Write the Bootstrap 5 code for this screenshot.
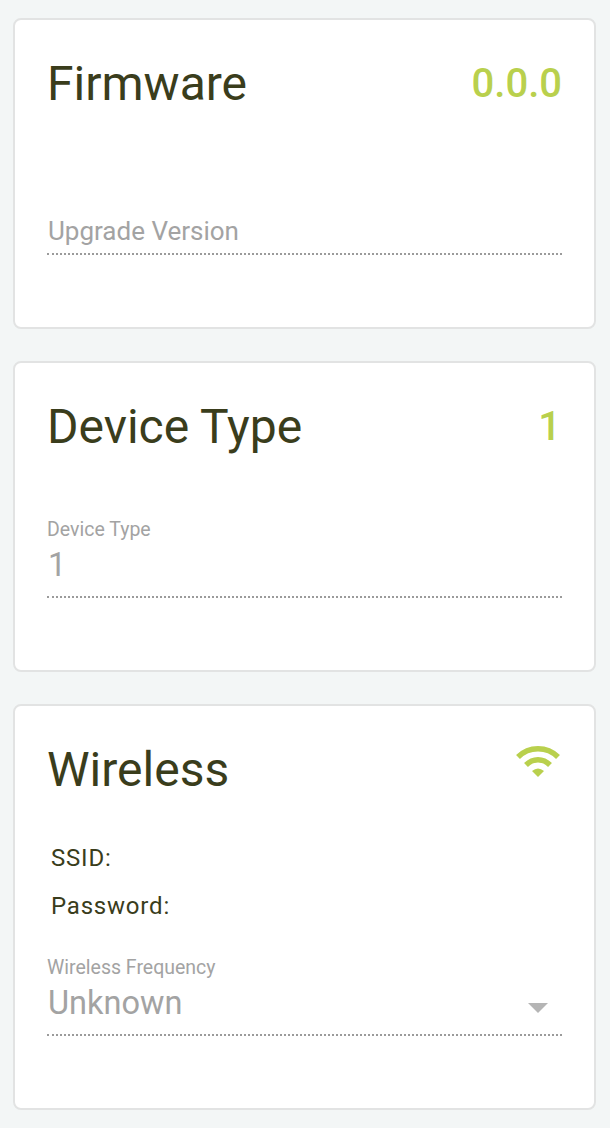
<!DOCTYPE html>
<html lang="en">
<head>
    <meta charset="UTF-8">
    <meta name="viewport" content="width=device-width, initial-scale=1.0">
    <title>Device</title>
    <link href="https://cdn.jsdelivr.net/npm/bootstrap@5.3.2/dist/css/bootstrap.min.css" rel="stylesheet">
    <style>
        body {
            background: #f3f6f6;
            font-family: Roboto, sans-serif;
            color: #3a3d1c;
            padding: 18px 14px 0 13px;
        }
        .panel {
            background: #fff;
            border: 2px solid #e2e3e3;
            border-radius: 8px;
            margin-bottom: 32px;
            padding: 0 32px 0 33px;
        }
        .panel-short { height: 311px; }
        .panel-tall { height: 406px; }
        .panel-head {
            height: 88px;
            padding-top: 35px;
        }
        .panel-title {
            font-size: 48px;
            line-height: 58px;
            font-weight: 400;
            margin: 0 0 0 -1px;
        }
        .panel-value {
            font-size: 40px;
            line-height: 58px;
            font-weight: 500;
            color: #b9d04d;
        }
        .panel-value-single { margin-right: 1px; }
        .wifi-icon { margin: 3px 1px 0 0; }
        .field {
            margin-left: -1px;
            border-bottom: 2px dotted #9b9b9b;
            color: #a3a3a3;
        }
        .field-label {
            font-size: 19.5px;
            line-height: 22px;
        }
        .field-row { padding: 2px 0 9px; }
        .field-value {
            font-size: 32.5px;
            line-height: 44px;
            padding-left: 1px;
        }
        .field-hint {
            font-size: 26px;
            line-height: 34px;
            padding: 0 0 5px 1px;
        }
        .field-upgrade { margin-top: 106px; }
        .field-type { margin-top: 68px; }
        .field-frequency { margin-top: 35px; }
        .info-line {
            font-size: 24px;
            line-height: 32px;
            letter-spacing: .8px;
            padding-left: 3px;
        }
        .info-ssid { margin-top: 48px; }
        .info-password { margin-top: 16px; }
        .caret-down {
            width: 20px;
            height: 10px;
            margin: 10px 14px 0 0;
        }
    </style>
</head>
<body>
    <div class="panel panel-short">
        <div class="panel-head d-flex justify-content-between">
            <h2 class="panel-title">Firmware</h2>
            <span class="panel-value">0.0.0</span>
        </div>
        <div class="field field-hint field-upgrade">Upgrade Version</div>
    </div>

    <div class="panel panel-short">
        <div class="panel-head d-flex justify-content-between">
            <h2 class="panel-title">Device Type</h2>
            <span class="panel-value panel-value-single">1</span>
        </div>
        <div class="field field-type">
            <div class="field-label">Device Type</div>
            <div class="field-row">
                <div class="field-value">1</div>
            </div>
        </div>
    </div>

    <div class="panel panel-tall">
        <div class="panel-head d-flex justify-content-between">
            <h2 class="panel-title">Wireless</h2>
            <svg class="wifi-icon flex-shrink-0" width="46" height="34" viewBox="0 0 46 34">
                <path d="M3 13 C14 2 32 2 43 13" fill="none" stroke="#b9d04d" stroke-width="5.5"/>
                <path d="M11 21 C18 14 28 14 35 21" fill="none" stroke="#b9d04d" stroke-width="5.5"/>
                <path d="M17 27 Q23 22 29 27 L23 33 Z" fill="#b9d04d"/>
            </svg>
        </div>
        <div class="info-line info-ssid">SSID:</div>
        <div class="info-line info-password">Password:</div>
        <div class="field field-frequency">
            <div class="field-label">Wireless Frequency</div>
            <div class="field-row d-flex justify-content-between align-items-center">
                <div class="field-value">Unknown</div>
                <svg class="caret-down" viewBox="0 0 20 10"><path d="M0 0 H20 L10 10 Z" fill="#b5b5b5"/></svg>
            </div>
        </div>
    </div>
    <script src="https://cdn.jsdelivr.net/npm/bootstrap@5.3.2/dist/js/bootstrap.bundle.min.js"></script>
</body>
</html>
